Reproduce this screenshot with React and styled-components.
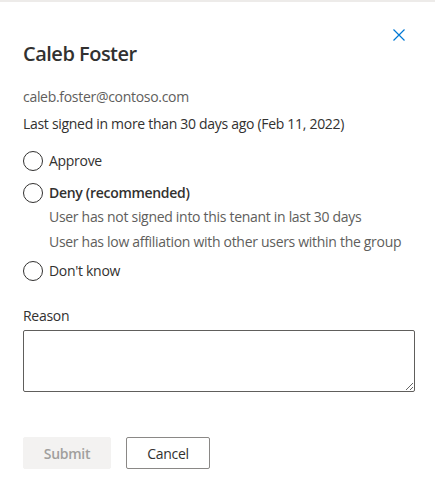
import styled, { createGlobalStyle } from "styled-components";

const GlobalStyle = createGlobalStyle`
  body {
    margin: 0;
    background: #ffffff;
    font-family: "Open Sans", "Noto Sans", sans-serif;
    letter-spacing: -0.3px;
    color: #323130;
  }
`;

const Dialog = styled.div`
  width: 435px;
  height: 496px;
  box-sizing: border-box;
  border-top: 2px solid #edebe9;
  padding: 17px 20px 0 23px;
  display: flex;
  flex-direction: column;
`;

const Header = styled.div`
  display: flex;
  justify-content: space-between;
  align-items: flex-start;
`;

const Title = styled.h1`
  margin: 21px 0 0 0;
  font-size: 20px;
  line-height: 28px;
  font-weight: 600;
  letter-spacing: -0.5px;
  color: #323130;
`;

const CloseButton = styled.button`
  width: 32px;
  height: 32px;
  border: none;
  background: transparent;
  padding: 0;
  display: flex;
  align-items: center;
  justify-content: center;
  cursor: pointer;
`;

const InfoLine = styled.p`
  margin: ${(p) => p.$top}px 0 0 0;
  font-size: 14px;
  line-height: 20px;
  color: ${(p) => (p.$muted ? "#605e5c" : "#323130")};
`;

const RadioRow = styled.label`
  display: flex;
  align-items: center;
  gap: 6px;
  margin-top: ${(p) => p.$top}px;
  font-size: 14px;
  line-height: 20px;
  font-weight: ${(p) => (p.$bold ? 600 : 400)};
  color: #323130;
  cursor: pointer;
`;

const Circle = styled.span`
  width: 20px;
  height: 20px;
  box-sizing: border-box;
  border: 1px solid #323130;
  border-radius: 50%;
  flex-shrink: 0;
`;

const Hint = styled.div`
  margin: ${(p) => p.$top}px 0 0 26px;
  font-size: 14px;
  line-height: 20px;
  color: #605e5c;
`;

const Label = styled.label`
  margin-top: 25px;
  font-size: 14px;
  line-height: 20px;
  font-weight: 500;
  color: #323130;
`;

const TextArea = styled.textarea`
  margin-top: 4px;
  width: 392px;
  height: 62px;
  box-sizing: border-box;
  border: 1px solid #605e5c;
  border-radius: 2px;
  font-family: inherit;
  font-size: 14px;
  padding: 6px 8px;
  outline: none;
`;

const Footer = styled.div`
  display: flex;
  gap: 15px;
  margin-top: 45px;
`;

const Button = styled.button`
  height: 32px;
  width: ${(p) => p.$width}px;
  padding: 0;
  box-sizing: border-box;
  border-radius: 2px;
  font-family: inherit;
  letter-spacing: inherit;
  font-size: 14px;
  font-weight: ${(p) => (p.disabled ? 600 : 400)};
  border: 1px solid ${(p) => (p.disabled ? "#f3f2f1" : "#8a8886")};
  background: ${(p) => (p.disabled ? "#f3f2f1" : "#ffffff")};
  color: ${(p) => (p.disabled ? "#a19f9d" : "#323130")};
  cursor: ${(p) => (p.disabled ? "default" : "pointer")};
`;

const CloseIcon = () => (
  <svg width="12" height="12" viewBox="0 0 12 12">
    <path d="M0.5 0.5 L11.5 11.5 M11.5 0.5 L0.5 11.5" stroke="#0078d4" strokeWidth="1.2" fill="none" />
  </svg>
);

const App = () => {
  return (
    <Dialog>
      <GlobalStyle />
      <Header>
        <Title>Caleb Foster</Title>
        <CloseButton aria-label="Close">
          <CloseIcon />
        </CloseButton>
      </Header>
      <InfoLine $top={19} $muted>caleb.foster@contoso.com</InfoLine>
      <InfoLine $top={7}>Last signed in more than 30 days ago (Feb 11, 2022)</InfoLine>
      <RadioRow $top={17}>
        <Circle />
        Approve
      </RadioRow>
      <RadioRow $top={12} $bold>
        <Circle />
        Deny (recommended)
      </RadioRow>
      <Hint $top={4}>User has not signed into this tenant in last 30 days</Hint>
      <Hint $top={5}>User has low affiliation with other users within the group</Hint>
      <RadioRow $top={9}>
        <Circle />
        Don't know
      </RadioRow>
      <Label>Reason</Label>
      <TextArea />
      <Footer>
        <Button disabled $width={88}>Submit</Button>
        <Button $width={84}>Cancel</Button>
      </Footer>
    </Dialog>
  );
};

export default App;
